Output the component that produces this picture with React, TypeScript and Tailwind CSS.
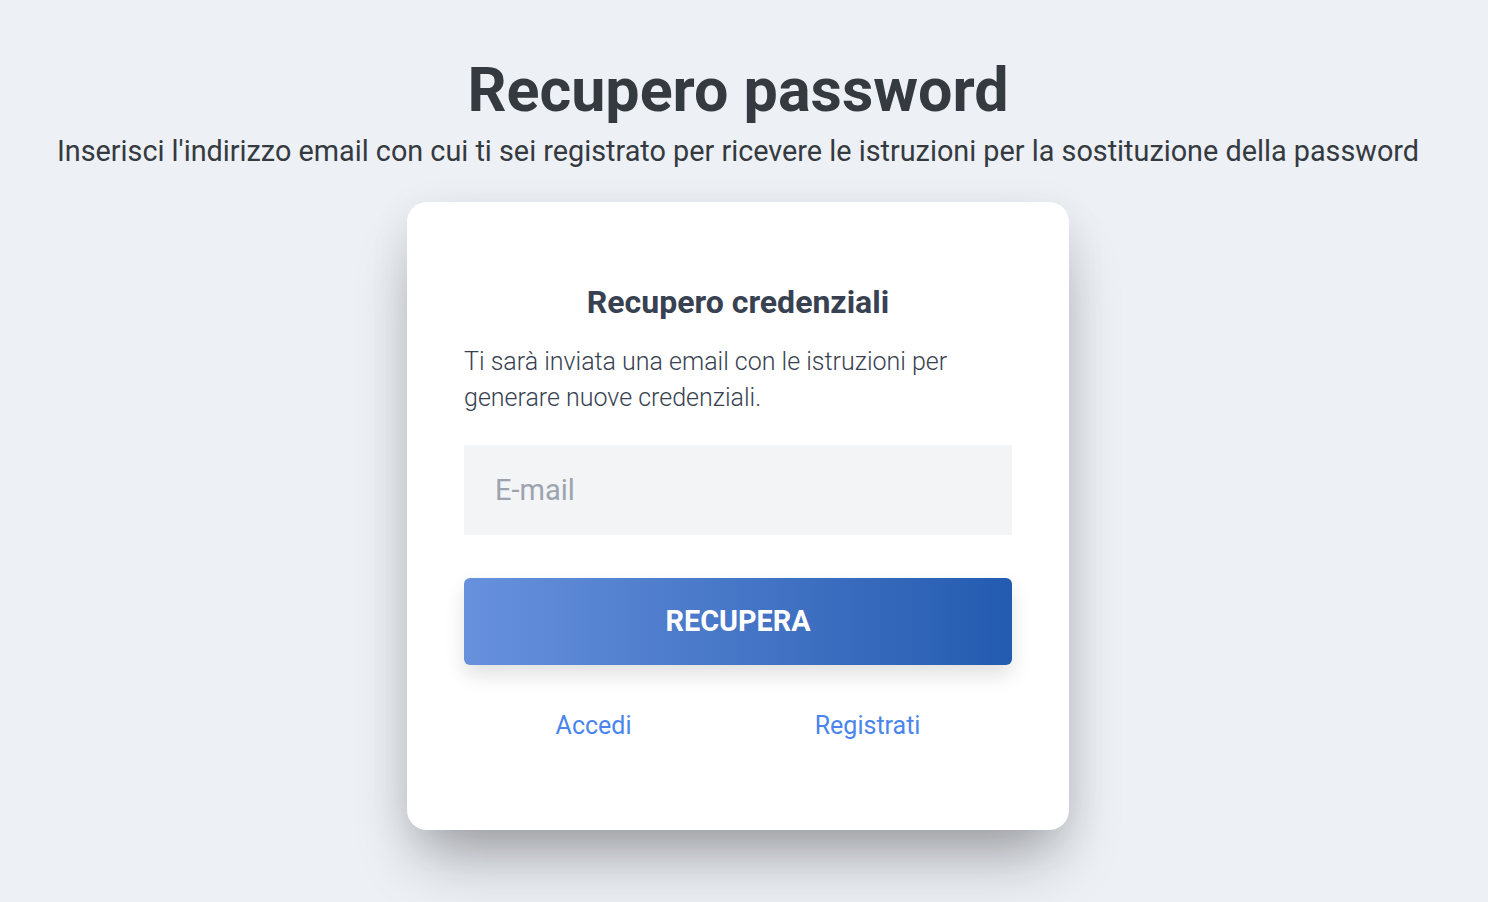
export default function App() {
  return (
    <div
      className="min-h-screen w-full bg-[#edf0f5] flex flex-col items-center pr-[12px] text-[#343a40]"
      style={{ fontFamily: "Roboto, 'Liberation Sans', sans-serif" }}
    >
      <h1 className="pt-[54px] text-[61px] leading-[1.2] font-bold text-[#343a40]">
        Recupero password
      </h1>
      <p className="mt-[7px] text-[28.8px] leading-[1.2] text-[#343a40]">
        Inserisci l'indirizzo email con cui ti sei registrato per ricevere le istruzioni per la sostituzione della password
      </p>

      <div className="mt-[33px] w-[662px] h-[628px] bg-white rounded-[20px] px-[57px] pt-[82px] shadow-[0_38px_64px_-14px_rgba(0,0,0,0.32),0_10px_40px_rgba(0,0,0,0.08)]">
        <h2 className="text-center text-[32px] leading-[36px] font-bold text-[#374151]">
          Recupero credenziali
        </h2>
        <p className="mt-[24px] text-[25px] leading-[36px] font-light text-[#374151]">
          Ti sarà inviata una email con le istruzioni per generare nuove credenziali.
        </p>

        <input
          type="email"
          placeholder="E-mail"
          className="mt-[29px] w-full h-[90px] bg-[#f3f4f6] px-[31px] text-[29px] text-[#374151] placeholder:text-[#9ca3af] outline-none"
        />

        <button className="mt-[43px] w-full h-[87px] rounded-[6px] bg-gradient-to-r from-[#6791dd] to-[#235bb0] text-white text-[28.8px] font-bold shadow-[0_10px_20px_rgba(0,0,0,0.12)]">
          RECUPERA
        </button>

        <div className="mt-[43px] flex justify-around text-[25px] leading-[36px] text-[#4a84ee]">
          <a href="#">Accedi</a>
          <a href="#">Registrati</a>
        </div>
      </div>
    </div>
  );
}
